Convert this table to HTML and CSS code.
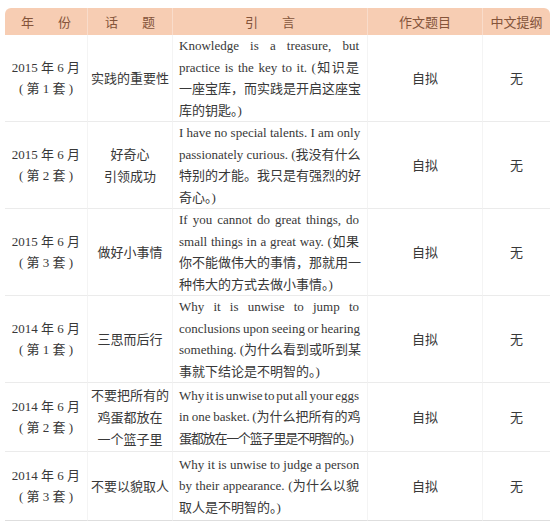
FILE: index.html
```html
<!DOCTYPE html>
<html lang="zh">
<head>
<meta charset="utf-8">
<link rel="stylesheet" href="styles.css">
</head>
<body>
<div class="page">
<table class="essay">
  <colgroup>
    <col class="c-year"><col class="c-topic"><col class="c-quote"><col class="c-title"><col class="c-outline">
  </colgroup>
  <thead>
    <tr>
      <th>年<span class="gap"></span>份</th>
      <th>话<span class="gap"></span>题</th>
      <th>引<span class="gap"></span>言</th>
      <th>作文题目</th>
      <th>中文提纲</th>
    </tr>
  </thead>
  <tbody>
    <tr>
      <td class="year">2015 年 6 月<br>( 第 1 套 )</td>
      <td class="topic">实践的重要性</td>
      <td class="quote">
        <span class="ln">Knowledge is a treasure, but</span>
        <span class="ln">practice is the key to it. (知识是</span>
        <span class="ln">一座宝库，而实践是开启这座宝</span>
        <span class="ln last">库的钥匙。)</span>
      </td>
      <td class="plain">自拟</td>
      <td class="plain">无</td>
    </tr>
    <tr>
      <td class="year">2015 年 6 月<br>( 第 2 套 )</td>
      <td class="topic">好奇心<br>引领成功</td>
      <td class="quote">
        <span class="ln">I have no special talents. I am only</span>
        <span class="ln">passionately curious. (我没有什么</span>
        <span class="ln">特别的才能。我只是有强烈的好</span>
        <span class="ln last">奇心。)</span>
      </td>
      <td class="plain">自拟</td>
      <td class="plain">无</td>
    </tr>
    <tr>
      <td class="year">2015 年 6 月<br>( 第 3 套 )</td>
      <td class="topic">做好小事情</td>
      <td class="quote">
        <span class="ln">If you cannot do great things, do</span>
        <span class="ln">small things in a great way. (如果</span>
        <span class="ln">你不能做伟大的事情，那就用一</span>
        <span class="ln last">种伟大的方式去做小事情。)</span>
      </td>
      <td class="plain">自拟</td>
      <td class="plain">无</td>
    </tr>
    <tr>
      <td class="year">2014 年 6 月<br>( 第 1 套 )</td>
      <td class="topic">三思而后行</td>
      <td class="quote">
        <span class="ln">Why it is unwise to jump to</span>
        <span class="ln tight1">conclusions upon seeing or hearing</span>
        <span class="ln">something. (为什么看到或听到某</span>
        <span class="ln last">事就下结论是不明智的。)</span>
      </td>
      <td class="plain">自拟</td>
      <td class="plain">无</td>
    </tr>
    <tr class="short">
      <td class="year">2014 年 6 月<br>( 第 2 套 )</td>
      <td class="topic">不要把所有的<br>鸡蛋都放在<br>一个篮子里</td>
      <td class="quote">
        <span class="ln tight2">Why it is unwise to put all your eggs</span>
        <span class="ln tight1">in one basket. (为什么把所有的鸡</span>
        <span class="ln last tight3">蛋都放在一个篮子里是不明智的。)</span>
      </td>
      <td class="plain">自拟</td>
      <td class="plain">无</td>
    </tr>
    <tr class="short">
      <td class="year">2014 年 6 月<br>( 第 3 套 )</td>
      <td class="topic">不要以貌取人</td>
      <td class="quote">
        <span class="ln">Why it is unwise to judge a person</span>
        <span class="ln">by their appearance. (为什么以貌</span>
        <span class="ln last">取人是不明智的。)</span>
      </td>
      <td class="plain">自拟</td>
      <td class="plain">无</td>
    </tr>
  </tbody>
</table>
</div>
</body>
</html>
```

FILE: styles.css
```css
html, body {
  margin: 0;
  padding: 0;
  background: #ffffff;
}

.page {
  padding: 8px 0 0 5px;
}

.essay {
  width: 545px;
  border-collapse: separate;
  border-spacing: 0;
  table-layout: fixed;
  font-family: "Liberation Serif", "Noto Sans CJK SC", serif;
  font-size: 13px;
  color: #383838;
}

.c-year { width: 82px; }
.c-topic { width: 85px; }
.c-quote { width: 195px; }
.c-title { width: 115px; }
.c-outline { width: 68px; }

.essay thead th {
  height: 27px;
  padding: 0;
  background: #f7cdb3;
  color: #84543a;
  font-family: "Noto Sans CJK SC", sans-serif;
  font-weight: normal;
  font-size: 13px;
  text-align: center;
  vertical-align: middle;
  border-left: 1px solid #f9dccb;
}

.essay thead th:first-child {
  border-left: none;
  border-top-left-radius: 6px;
}

.essay thead th:last-child {
  border-top-right-radius: 6px;
}

.gap {
  display: inline-block;
  width: 24px;
}

.essay tbody td {
  padding: 0;
  line-height: 21.5px;
  text-align: center;
  vertical-align: middle;
  border-bottom: 1px solid #ebebeb;
  border-left: 1px solid #f4f4f4;
}

.essay tbody td:first-child {
  border-left: none;
}

.essay tbody tr:last-child td {
  border-bottom: 1px solid #dedede;
}

.essay tbody tr.short {
  height: 69px;
}

.essay td.topic {
  font-family: "Noto Sans CJK SC", sans-serif;
  line-height: 22px;
}

.essay td.plain {
  font-family: "Noto Sans CJK SC", sans-serif;
}

.essay td.quote {
  padding: 0 8px 0 6px;
  text-align: left;
}

.ln {
  display: block;
  white-space: nowrap;
  text-align: justify;
  text-align-last: justify;
}

.ln.last {
  text-align-last: left;
}

.ln.tight1 {
  word-spacing: -0.6px;
}

.ln.tight2 {
  word-spacing: -1.6px;
}

.ln.tight3 {
  letter-spacing: -1.2px;
}
```
